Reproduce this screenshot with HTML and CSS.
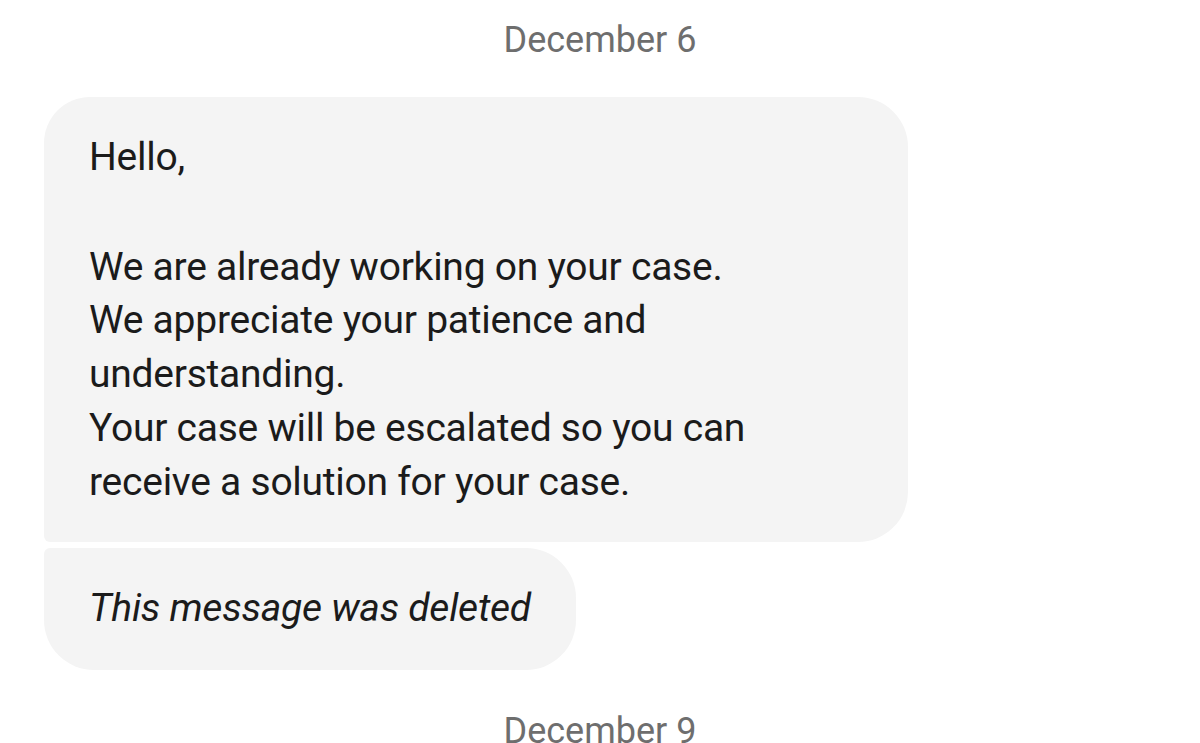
FILE: index.html
```html
<!DOCTYPE html>
<html lang="en">
<head>
<meta charset="utf-8">
<title>Chat</title>
<link rel="stylesheet" href="styles.css">
</head>
<body>
<main class="thread">
  <div class="date date-first">December 6</div>
  <div class="group">
    <div class="bubble bubble-first">
      <p class="para">Hello,</p>
      <p class="para">We are already working on your case.<br>We appreciate your patience and<br>understanding.<br>Your case will be escalated so you can<br>receive a solution for your case.</p>
    </div>
    <div class="bubble bubble-last deleted">This message was deleted</div>
  </div>
  <div class="date date-next">December 9</div>
</main>
</body>
</html>
```

FILE: styles.css
```css
html, body {
  margin: 0;
  padding: 0;
  background: #ffffff;
}
body {
  font-family: Roboto, "Noto Sans", "Liberation Sans", sans-serif;
  overflow: hidden;
  height: 743px;
}
.thread {
  display: flex;
  flex-direction: column;
}
.date {
  text-align: center;
  color: #6e6e6e;
  font-size: 36px;
  line-height: 42px;
}
.date-first {
  padding-top: 19px;
  padding-bottom: 36px;
}
.date-next {
  padding-top: 40px;
}
.group {
  display: flex;
  flex-direction: column;
  align-items: flex-start;
  gap: 6px;
  padding-left: 44px;
}
.bubble {
  background: #f4f4f4;
  color: #1b1b1b;
  font-size: 39px;
  letter-spacing: -0.25px;
  line-height: 53.7px;
  padding: 0 45px;
  box-sizing: border-box;
}
.bubble-first {
  width: 864px;
  height: 445px;
  padding-top: 34px;
  border-radius: 46px 50px 50px 6px;
}
.para {
  margin: 0;
}
.para + .para {
  margin-top: 56px;
}
.bubble-last {
  height: 122px;
  display: flex;
  align-items: center;
  border-radius: 6px 50px 50px 50px;
}
.deleted {
  font-style: italic;
}
```
